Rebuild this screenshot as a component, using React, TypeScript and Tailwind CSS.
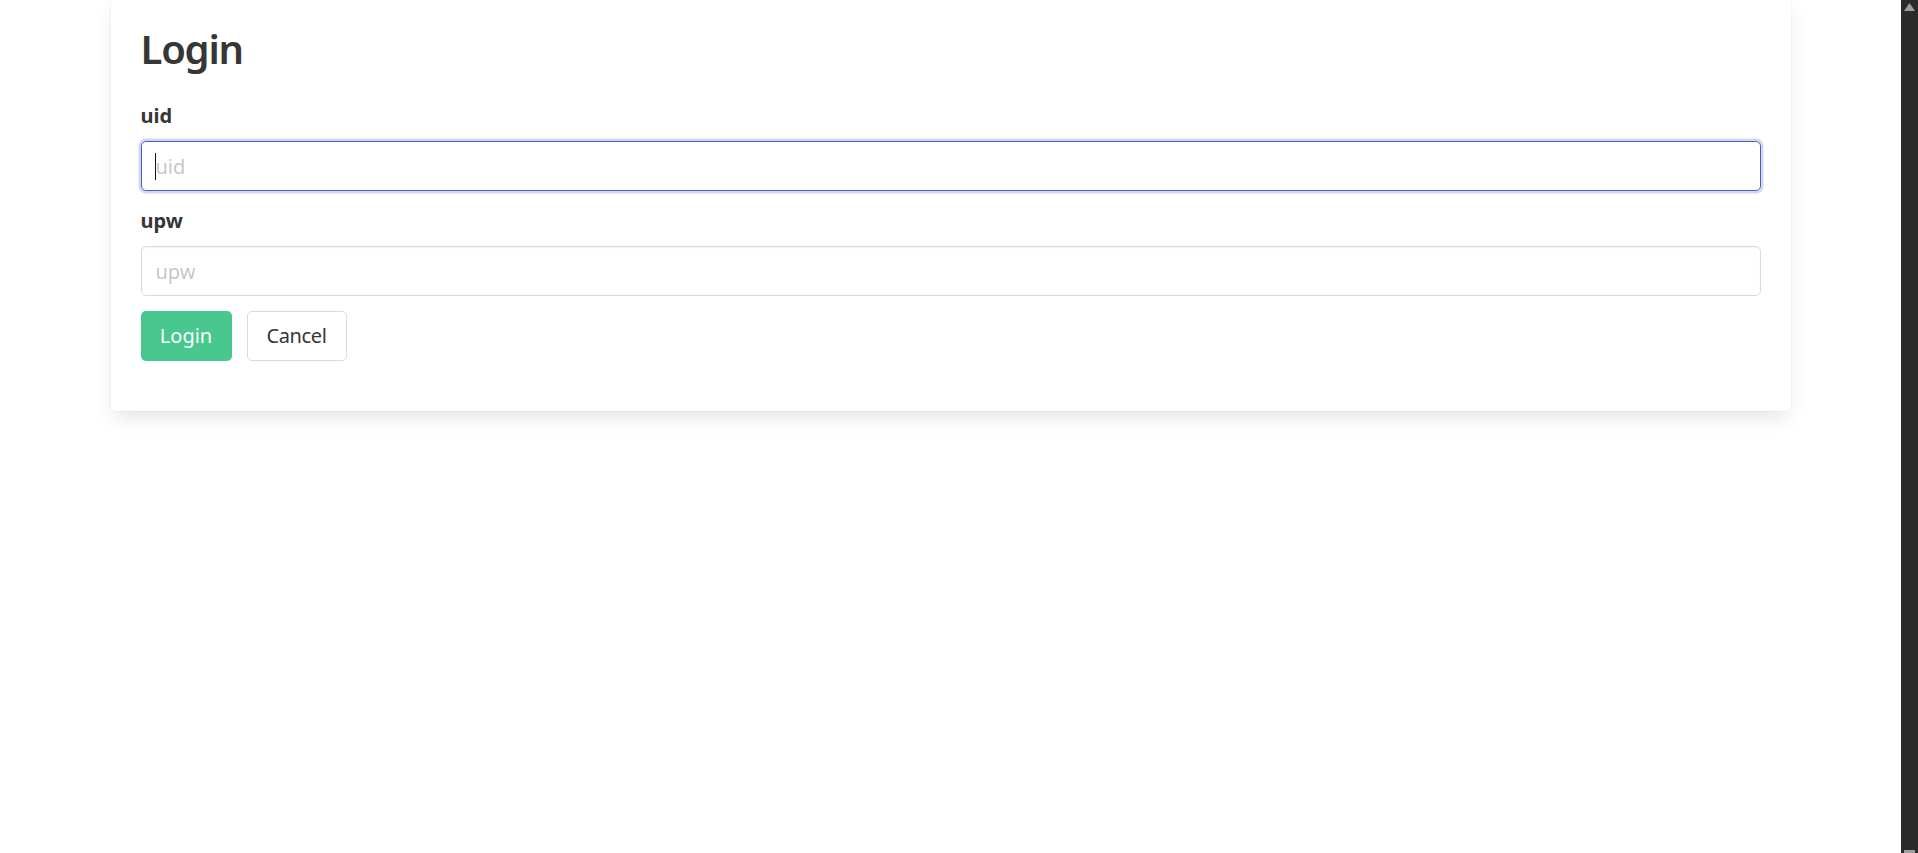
import React from "react";

const font = { fontFamily: '"Noto Sans", "Open Sans", sans-serif' };

export default function App() {
  return (
    <div className="flex h-[853px] w-[1918px] overflow-hidden bg-white" style={font}>
      <div className="flex-1 min-w-0">
        <div className="mx-auto w-[1680px] -mt-1 rounded-[6px] bg-white p-[30px] pb-[50px] shadow-[0_10px_20px_-3px_rgba(10,10,10,0.1),0_0_0_1px_rgba(10,10,10,0.02)]">
          <h1 className="mb-[30px] text-[40px] font-semibold leading-[45px] tracking-[-1.2px] text-[#363636]">Login</h1>
          <div className="mb-[15px]">
            <label className="mb-[10px] block text-[20px] font-bold leading-[30px] text-[#363636]">uid</label>
            <div className="relative">
              <input
                placeholder="uid"
                className="block h-[50px] w-full rounded-[5px] border border-[#485fc7] px-[14px] text-[20px] text-[#363636] shadow-[0_0_0_2.5px_rgba(72,95,199,0.25)] outline-none placeholder:text-[rgba(54,54,54,0.3)]"
              />
              <div className="pointer-events-none absolute left-[14px] top-[12px] h-[27px] w-[1px] bg-[#111]" />
            </div>
          </div>
          <div className="mb-[15px]">
            <label className="mb-[10px] block text-[20px] font-bold leading-[30px] text-[#363636]">upw</label>
            <input
              placeholder="upw"
              className="block h-[50px] w-full rounded-[5px] border border-[#dbdbdb] px-[14px] text-[20px] text-[#363636] shadow-[inset_0_1px_2px_rgba(10,10,10,0.05)] outline-none placeholder:text-[rgba(54,54,54,0.3)]"
            />
          </div>
          <div className="flex gap-[15px]">
            <button className="flex h-[50px] w-[91px] items-center justify-center rounded-[5px] border border-transparent bg-[#48c78e] text-[20px] text-white">Login</button>
            <button className="flex h-[50px] w-[100px] items-center justify-center rounded-[5px] border border-[#dbdbdb] bg-white text-[20px] tracking-[-0.4px] text-[#363636]">Cancel</button>
          </div>
        </div>
      </div>
      <div className="relative flex w-[17px] shrink-0 flex-col items-center bg-[#2b2b2b]">
        <svg width="11" height="8" viewBox="0 0 11 8" className="mt-[3px]">
          <polygon points="5.5,0 11,8 0,8" fill="#9e9e9e" />
        </svg>
        <div className="absolute bottom-0 left-[3px] h-[3px] w-[11px] bg-[#9e9e9e]" />
      </div>
    </div>
  );
}
